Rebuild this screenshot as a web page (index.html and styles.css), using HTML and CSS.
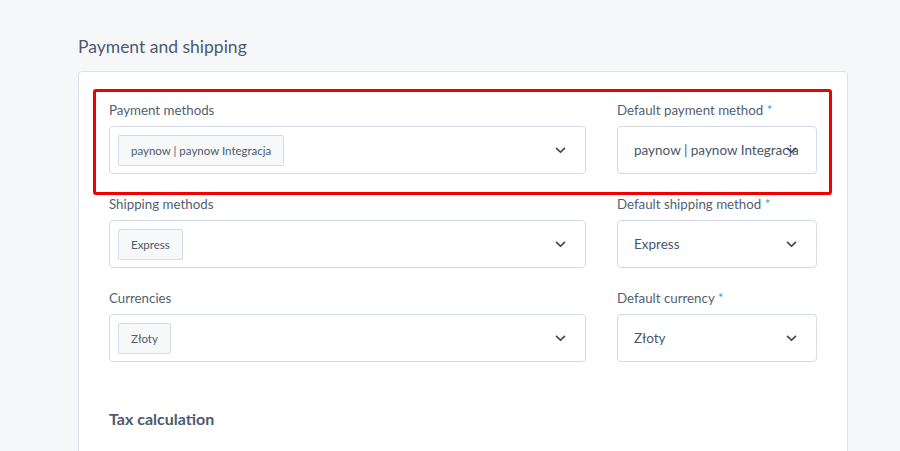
FILE: index.html
```html
<!DOCTYPE html>
<html>
<head>
<meta charset="utf-8">
<link rel="stylesheet" href="styles.css">
</head>
<body>
<main class="page">
  <h2 class="section-title">Payment and shipping</h2>
  <section class="card">
    <div class="highlight"></div>
    <div class="form-row">
      <div class="field wide">
        <label class="label">Payment methods</label>
        <div class="select multi">
          <span class="tag">paynow | paynow Integracja</span>
          <svg class="chev" viewBox="0 0 12 8"><path d="M1.5 1.5 L6 6 L10.5 1.5" /></svg>
        </div>
      </div>
      <div class="field narrow">
        <label class="label">Default payment method <span class="req">*</span></label>
        <div class="select single">
          <span class="value">paynow | paynow Integracja</span>
          <svg class="chev" viewBox="0 0 12 8"><path d="M1.5 1.5 L6 6 L10.5 1.5" /></svg>
        </div>
      </div>
    </div>
    <div class="form-row">
      <div class="field wide">
        <label class="label">Shipping methods</label>
        <div class="select multi">
          <span class="tag">Express</span>
          <svg class="chev" viewBox="0 0 12 8"><path d="M1.5 1.5 L6 6 L10.5 1.5" /></svg>
        </div>
      </div>
      <div class="field narrow">
        <label class="label">Default shipping method <span class="req">*</span></label>
        <div class="select single">
          <span class="value">Express</span>
          <svg class="chev" viewBox="0 0 12 8"><path d="M1.5 1.5 L6 6 L10.5 1.5" /></svg>
        </div>
      </div>
    </div>
    <div class="form-row">
      <div class="field wide">
        <label class="label">Currencies</label>
        <div class="select multi">
          <span class="tag">Złoty</span>
          <svg class="chev" viewBox="0 0 12 8"><path d="M1.5 1.5 L6 6 L10.5 1.5" /></svg>
        </div>
      </div>
      <div class="field narrow">
        <label class="label">Default currency <span class="req">*</span></label>
        <div class="select single">
          <span class="value">Złoty</span>
          <svg class="chev" viewBox="0 0 12 8"><path d="M1.5 1.5 L6 6 L10.5 1.5" /></svg>
        </div>
      </div>
    </div>
    <h3 class="subtitle">Tax calculation</h3>
  </section>
</main>
</body>
</html>
```
FILE: styles.css
```css
* { box-sizing: border-box; }
html, body { margin: 0; padding: 0; }
body {
  background: #f6f7f9;
  font-family: Lato, "Open Sans", sans-serif;
  color: #4f5b6d;
  height: 451px;
  overflow: hidden;
}
.page {
  padding: 36px 52px 0 78px;
}
.section-title {
  margin: 0 0 13px 0;
  font-size: 17.5px;
  font-weight: 400;
  color: #4c5a70;
  line-height: 22px;
}
.card {
  position: relative;
  background: #fff;
  border: 1px solid #dde2e8;
  border-radius: 4px;
  padding: 30px 30px 40px 30px;
  height: 420px;
}
.highlight {
  position: absolute;
  left: 14px;
  top: 17px;
  width: 739px;
  height: 106px;
  border: 3px solid #f20000;
  border-radius: 3px;
  pointer-events: none;
}
.form-row {
  display: flex;
  gap: 31px;
  margin-bottom: 22px;
}
.field.wide { width: 477px; }
.field.narrow { width: 200px; }
.label {
  display: block;
  font-size: 13.3px;
  line-height: 16px;
  color: #535f70;
  margin-bottom: 8px;
}
.req { color: #3aa0e0; }
.select {
  position: relative;
  height: 48px;
  border: 1px solid #d5dbe3;
  border-radius: 4px;
  display: flex;
  align-items: center;
  background: #fff;
}
.select.multi { padding-left: 8px; }
.select.single { padding-left: 16px; }
.tag {
  display: inline-flex;
  align-items: center;
  height: 31px;
  padding: 0 12px;
  background: #f6f8fa;
  border: 1px solid #d6dce4;
  border-radius: 2px;
  font-size: 11.5px;
  color: #4f5b6d;
}
.value {
  font-size: 13.5px;
  color: #4a566a;
  white-space: nowrap;
  overflow: hidden;
}
.chev {
  position: absolute;
  right: 19px;
  top: 20px;
  width: 11px;
  height: 7px;
  fill: none;
  stroke: #3f4a5c;
  stroke-width: 2;
  stroke-linecap: round;
  stroke-linejoin: round;
}
.subtitle {
  margin: 47px 0 0 0;
  font-size: 16px;
  font-weight: 700;
  color: #4c5a70;
}
```
